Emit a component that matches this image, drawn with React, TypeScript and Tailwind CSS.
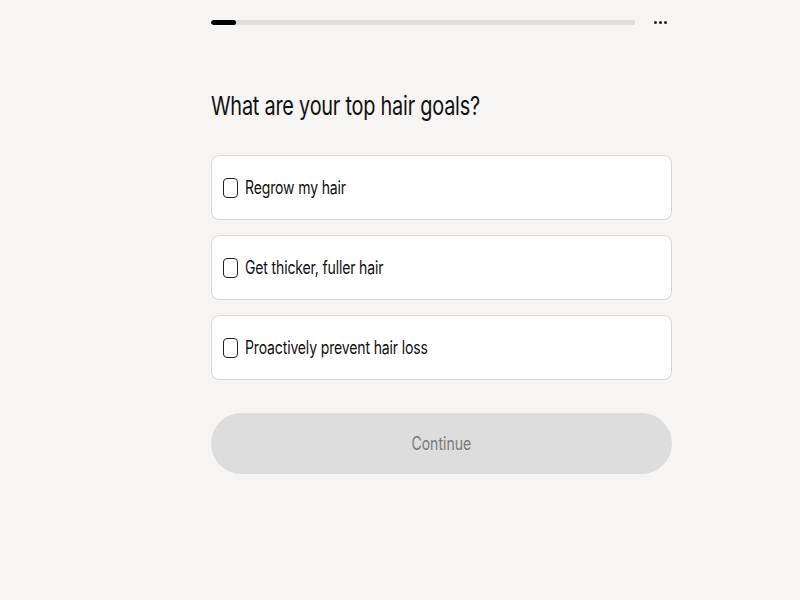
const options = [
  "Regrow my hair",
  "Get thicker, fuller hair",
  "Proactively prevent hair loss",
];

const App = () => {
  return (
    <div className="min-h-[600px] w-[800px] bg-[#f6f5f3] font-['Inter',sans-serif] text-[#111]">
      <div className="w-[461px] ml-[211px] pt-[20px]">
        <div className="flex items-center">
          <div className="h-[5px] w-[424px] rounded-full bg-[#dedddc] overflow-hidden">
            <div className="h-full w-[25px] rounded-full bg-black" />
          </div>
          <div className="ml-[19px] flex gap-[2px]">
            <span className="h-[3px] w-[3px] rounded-full bg-[#222]" />
            <span className="h-[3px] w-[3px] rounded-full bg-[#222]" />
            <span className="h-[3px] w-[3px] rounded-full bg-[#222]" />
          </div>
        </div>

        <h1 className="mt-[65px] text-[26px] leading-[32px] tracking-[-0.3px] whitespace-nowrap">
          <span className="inline-block origin-left scale-x-[0.765]">
            What are your top hair goals?
          </span>
        </h1>

        <div className="mt-[33px] flex flex-col gap-[15px]">
          {options.map((opt) => (
            <label
              key={opt}
              className="flex h-[65px] items-center rounded-[8px] border border-[#d8d8d6] bg-white pl-[11px]"
            >
              <span className="h-[20px] w-[15px] rounded-[4px] border-[1.5px] border-[#222]" />
              <span className="ml-[7px] whitespace-nowrap text-[18px] tracking-[-0.2px]">
                <span className="inline-block origin-left scale-x-[0.78]">{opt}</span>
              </span>
            </label>
          ))}
        </div>

        <button
          className="mt-[33px] flex h-[61px] w-full items-center justify-center rounded-full bg-[#dddddd] text-[18px] text-[#7a7a7a]"
          type="button"
        >
          <span className="inline-block scale-x-[0.78]">Continue</span>
        </button>
      </div>
    </div>
  );
};

export default App;
